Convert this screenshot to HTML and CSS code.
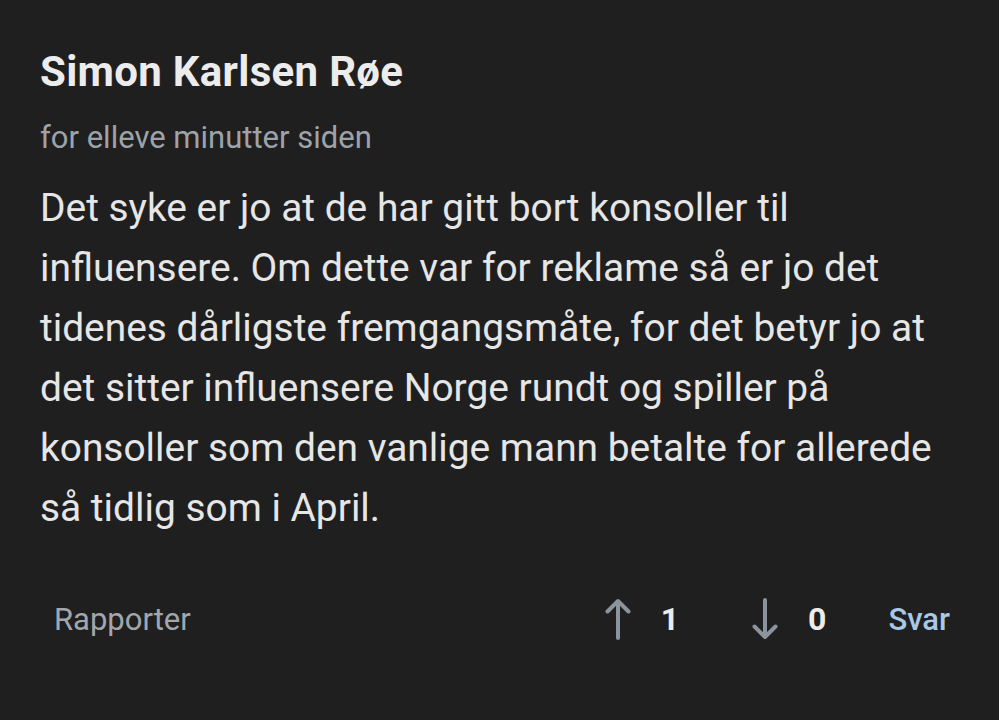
FILE: index.html
```html
<!DOCTYPE html>
<html lang="no">
<head>
<meta charset="utf-8">
<link rel="stylesheet" href="styles.css">
</head>
<body>
<article class="comment">
  <h2 class="author">Simon Karlsen Røe</h2>
  <div class="time">for elleve minutter siden</div>
  <p class="text">Det syke er jo at de har gitt bort konsoller til influensere. Om dette var for reklame så er jo det tidenes dårligste fremgangsmåte, for det betyr jo at det sitter influensere Norge rundt og spiller på konsoller som den vanlige mann betalte for allerede så tidlig som i April.</p>
  <div class="actions">
    <span class="report">Rapporter</span>
    <div class="votes">
      <span class="vote up">
        <svg class="arrow" viewBox="0 0 26 42" width="26" height="42"><path d="M13 40V3M2.5 13.5L13 3L23.5 13.5" fill="none" stroke="currentColor" stroke-width="4" stroke-linecap="round" stroke-linejoin="round"/></svg>
        <span class="count">1</span>
      </span>
      <span class="vote down">
        <svg class="arrow" viewBox="0 0 26 42" width="26" height="42"><path d="M13 2V39M2.5 28.5L13 39L23.5 28.5" fill="none" stroke="currentColor" stroke-width="4" stroke-linecap="round" stroke-linejoin="round"/></svg>
        <span class="count">0</span>
      </span>
      <span class="reply">Svar</span>
    </div>
  </div>
</article>
</body>
</html>
```
FILE: styles.css
```css
html, body {
  margin: 0;
  padding: 0;
  background: #1f1f1f;
}
body {
  font-family: Roboto, "Noto Sans", sans-serif;
  color: #e6e6e6;
  width: 999px;
  height: 720px;
  overflow: hidden;
}
.comment {
  padding: 47px 40px 0 40px;
}
.author {
  margin: 0;
  font-size: 42px;
  font-weight: 700;
  line-height: 50px;
  letter-spacing: 0.3px;
  color: #ececec;
}
.time {
  margin-top: 23px;
  font-size: 31px;
  line-height: 36px;
  color: #9ea3a9;
}
.text {
  margin: 22px 0 0 0;
  font-size: 38.9px;
  line-height: 60px;
  color: #e6e6e6;
}
.actions {
  margin-top: 56px;
  display: flex;
  align-items: center;
  justify-content: space-between;
  padding: 0 9px 0 14px;
  height: 50px;
}
.report {
  font-size: 31px;
  color: #a2a7ad;
}
.votes {
  display: flex;
  align-items: center;
}
.vote {
  display: flex;
  align-items: center;
  color: #8b939c;
}
.vote.up {
  margin-right: 73px;
}
.vote.down {
  margin-right: 62px;
}
.arrow {
  display: block;
}
.count {
  margin-left: 30px;
  font-size: 32px;
  font-weight: 700;
  color: #ececec;
}
.reply {
  font-size: 31px;
  font-weight: 500;
  color: #a9c8e6;
}
```
